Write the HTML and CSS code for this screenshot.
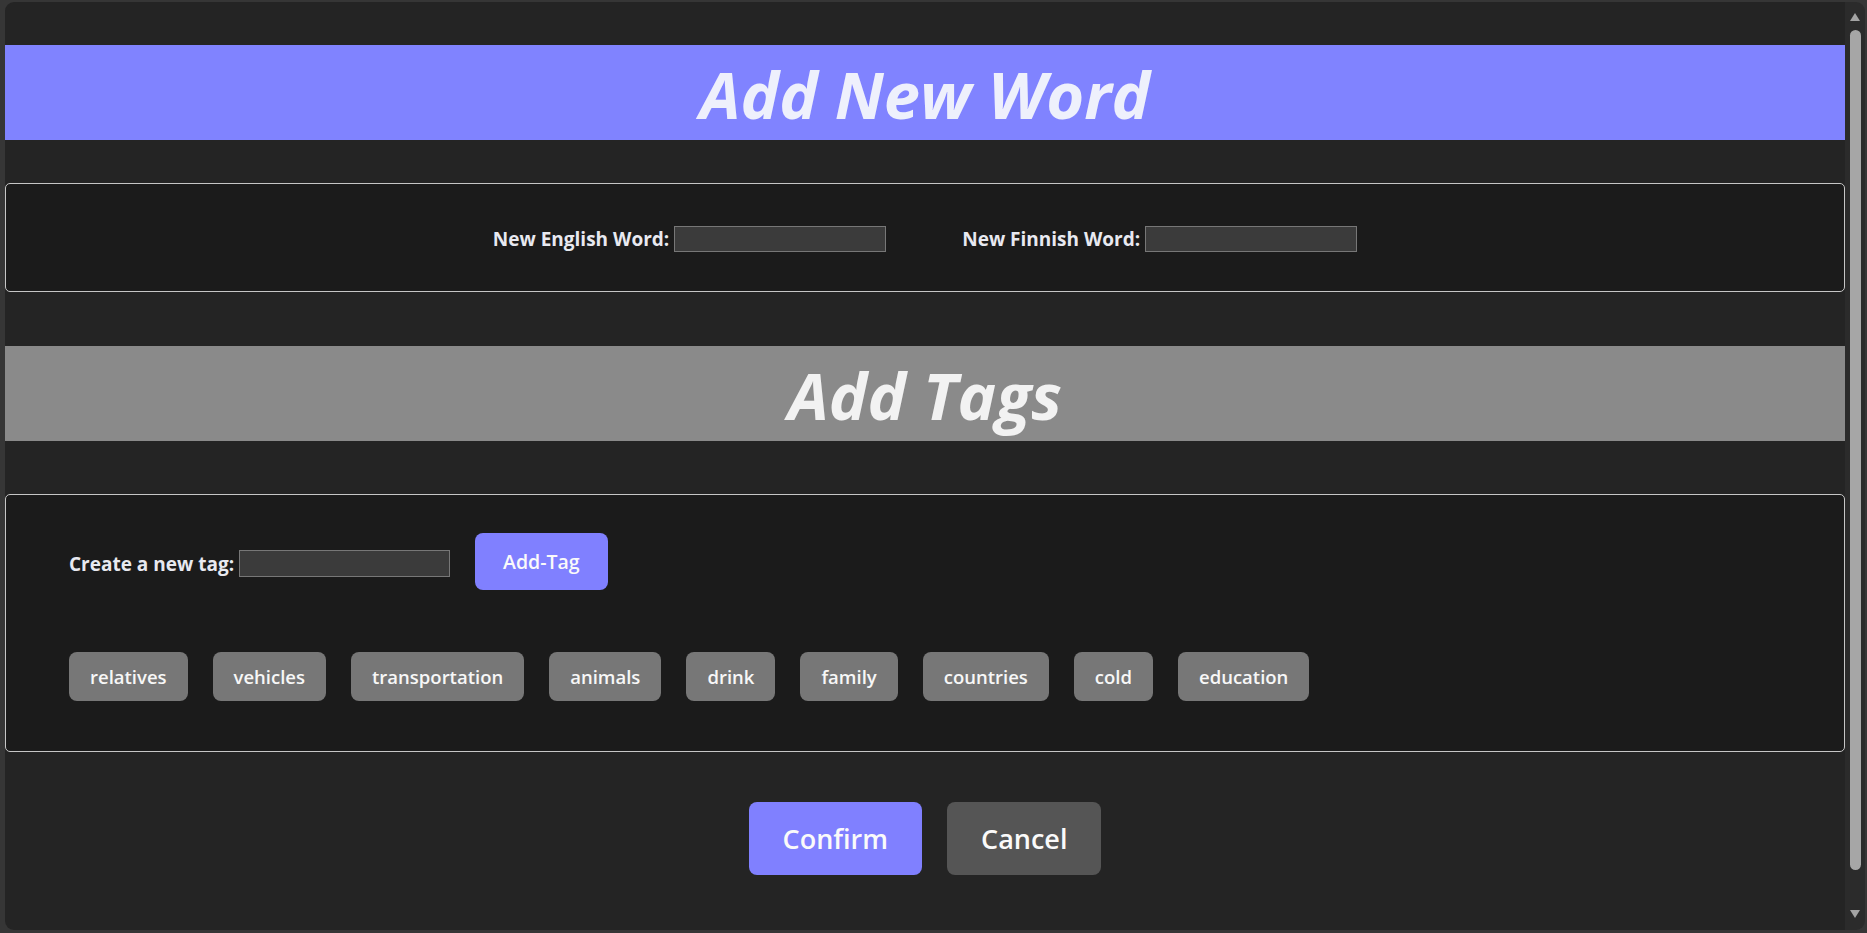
FILE: index.html
```html
<!DOCTYPE html>
<html lang="en">
<head>
<meta charset="utf-8">
<title>Add New Word</title>
<link rel="stylesheet" href="styles.css">
</head>
<body>
<div class="window">
  <main class="content">
    <h1 class="band band-blue">Add New Word</h1>
    <section class="box word-box">
      <label class="field">New English Word: <input class="text-input" type="text"></label>
      <label class="field">New Finnish Word: <input class="text-input" type="text"></label>
    </section>
    <h1 class="band band-gray">Add Tags</h1>
    <section class="box tag-box">
      <div class="tag-create">
        <label class="field field-tag">Create a new tag: <input class="text-input" type="text"></label>
        <button class="btn btn-add">Add-Tag</button>
      </div>
      <div class="tag-list">
        <span class="tag">relatives</span>
        <span class="tag">vehicles</span>
        <span class="tag">transportation</span>
        <span class="tag">animals</span>
        <span class="tag">drink</span>
        <span class="tag">family</span>
        <span class="tag">countries</span>
        <span class="tag">cold</span>
        <span class="tag">education</span>
      </div>
    </section>
    <div class="actions">
      <button class="btn btn-confirm">Confirm</button>
      <button class="btn btn-cancel">Cancel</button>
    </div>
  </main>
  <div class="scrollbar">
    <div class="arrow arrow-up"></div>
    <div class="track"><div class="thumb"></div></div>
    <div class="arrow arrow-down"></div>
  </div>
</div>
</body>
</html>
```

FILE: styles.css
```css
* { box-sizing: border-box; }
html, body {
  margin: 0;
  height: 100%;
  overflow: hidden;
}
body {
  background: #363636;
  font-family: "Open Sans", "Noto Sans", sans-serif;
  color: #e9eaf0;
}
.window {
  height: 100vh;
  display: flex;
  padding: 2px 2px 3px 5px;
}
.content {
  flex: 1;
  background: #242424;
  border-radius: 9px 0 0 9px;
  display: flex;
  flex-direction: column;
  padding-top: 43px;
  overflow: hidden;
}
.band {
  margin: 0;
  height: 95px;
  display: flex;
  align-items: center;
  justify-content: center;
  font-size: 65px;
  font-weight: 700;
  font-style: italic;
  padding-top: 2px;
}
.band-blue {
  background: #8083ff;
  color: #eef0fc;
}
.band-gray {
  background: #8a8a8a;
  color: #f2f2f2;
  margin-top: 54px;
}
.box {
  background: #1b1b1b;
  border: 1px solid #c6c6c6;
  border-radius: 5px;
}
.word-box {
  margin-top: 43px;
  height: 109px;
  display: flex;
  align-items: center;
  justify-content: center;
  gap: 76px;
  padding-top: 2px;
}
.field {
  font-size: 19px;
  font-weight: 700;
  display: flex;
  align-items: center;
  gap: 5px;
  color: #e8e9f0;
}
.field-tag {
  padding-top: 4px;
}
.text-input {
  width: 212px;
  height: 26px;
  background: #3b3b3b;
  border: 1px solid #777;
  margin: 0;
  padding: 0;
}
.tag-box {
  margin-top: 53px;
  height: 258px;
  padding: 38px 0 0 63px;
}
.tag-create {
  display: flex;
  align-items: center;
  gap: 25px;
}
.tag-create .text-input {
  width: 211px;
  height: 27px;
}
.btn {
  border: none;
  font-family: inherit;
  font-weight: 600;
  color: #fafafa;
  border-radius: 8px;
  margin: 0;
}
.btn-add {
  background: #8080ff;
  height: 57px;
  padding: 0 28px;
  font-size: 19.5px;
}
.tag-list {
  margin-top: 62px;
  display: flex;
  gap: 25px;
}
.tag {
  background: #777;
  color: #f7f7f7;
  height: 49px;
  padding: 0 21px;
  border-radius: 8px;
  display: flex;
  align-items: center;
  font-size: 18.5px;
  font-weight: 600;
}
.actions {
  margin-top: 50px;
  display: flex;
  justify-content: center;
  gap: 25px;
}
.btn-confirm, .btn-cancel {
  height: 73px;
  font-size: 27px;
  padding: 0 34px;
}
.btn-confirm { background: #8080ff; }
.btn-cancel { background: #555; }
.scrollbar {
  width: 20px;
  background: #2b2b2b;
  border-radius: 0 9px 9px 0;
  display: flex;
  flex-direction: column;
  align-items: center;
  padding: 11px 0 12px;
}
.arrow {
  width: 0;
  height: 0;
  border-left: 5px solid transparent;
  border-right: 5px solid transparent;
}
.arrow-up { border-bottom: 8px solid #a3a3a3; }
.arrow-down { border-top: 8px solid #a3a3a3; }
.track {
  flex: 1;
  width: 100%;
  display: flex;
  justify-content: center;
  padding: 9px 0 40px;
}
.thumb {
  width: 11px;
  height: 100%;
  background: #a6a6a6;
  border-radius: 6px;
}
```
